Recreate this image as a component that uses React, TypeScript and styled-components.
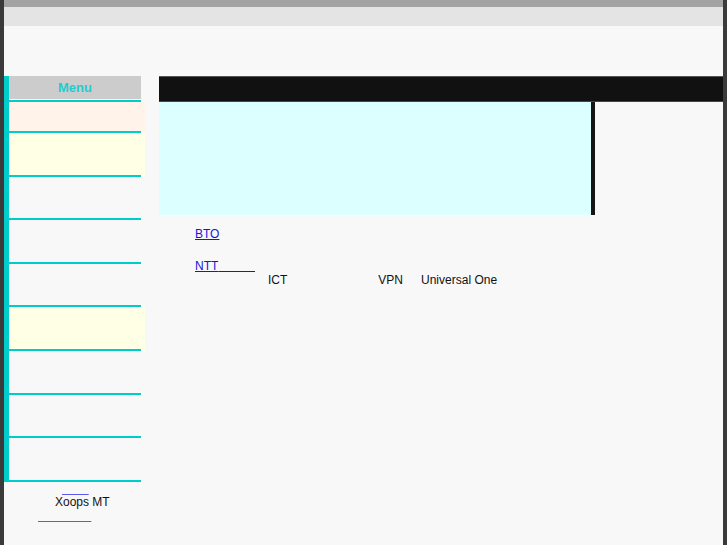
import styled, { createGlobalStyle } from 'styled-components'

const teal = '#00cccc'
const nb = (n: number) => '\u00a0'.repeat(n)

const GlobalStyle = createGlobalStyle`
    html, body {
        margin: 0;
        padding: 0;
        background: #f8f8f8;
    }
    body {
        font-family: "Liberation Sans", Arial, sans-serif;
        font-size: 12px;
        color: #111;
    }
`

const Frame = styled.div`
    box-sizing: border-box;
    min-height: 100vh;
    border-left: 4px solid #3a3a3a;
    border-right: 4px solid #3a3a3a;
    background: #f8f8f8;
`

const TopStrip = styled.div`
    height: 7px;
    background: #a3a3a3;
`

const SubStrip = styled.div`
    height: 19px;
    background: #e4e4e4;
`

const Banner = styled.div`
    height: 50px;
`

const Layout = styled.div`
    display: flex;
    align-items: flex-start;
    gap: 18px;
`

const Sidebar = styled.aside`
    width: 137px;
    flex-shrink: 0;
`

const Menu = styled.nav`
    border-left: 5px solid ${teal};
`

const MenuHead = styled.div`
    width: 132px;
    height: 23px;
    line-height: 23px;
    background: #cccccc;
    border-bottom: 1px solid #ffffff;
    color: #22cccc;
    font-size: 13px;
    font-weight: bold;
    text-align: center;
`

const MenuList = styled.ul`
    list-style: none;
    margin: 0;
    padding: 0;
    width: 132px;
    border-top: 2px solid ${teal};
`

const MenuItem = styled.li<{ $bg?: string; $short?: boolean }>`
    height: ${(p) => (p.$short ? '29px' : '41.6px')};
    background: ${(p) => p.$bg || 'transparent'};
    box-shadow: 4px 0 0 ${(p) => p.$bg || 'transparent'};
    border-bottom: 2px solid ${teal};
`

const Footer = styled.div`
    padding-top: 1px;
    font-size: 12px;
    line-height: 13.5px;
`

const FootLine = styled.div<{ $indent: number }>`
    padding-left: ${(p) => p.$indent}px;
    white-space: pre;
`

const FootLink = styled.a`
    color: #5a5aee;
    text-decoration: underline;
`

const Main = styled.main`
    flex: 1;
    min-width: 0;
`

const TitleBar = styled.div`
    box-sizing: border-box;
    height: 26px;
    background: #111111;
    border-top: 1px solid #555;
    border-bottom: 1px solid #444;
`

const Hero = styled.div`
    width: 432px;
    height: 113px;
    background: #dcffff;
    border-right: 4px solid #151515;
`

const Content = styled.div`
    padding: 12px 0 0 36px;
    font-size: 12px;
    line-height: 14px;
`

const Para = styled.p`
    margin: 0 0 18px;
    white-space: nowrap;
`

const Link = styled.a`
    color: #1515e0;
    text-decoration: underline;
`

const Gap = styled.span<{ $w: number }>`
    display: inline-block;
    width: ${(p) => p.$w}px;
`

const shades: { bg?: string; short?: boolean }[] = [
    { bg: '#fff3ea', short: true },
    { bg: '#ffffe6' },
    {},
    {},
    {},
    { bg: '#ffffe6' },
    {},
    {},
    {},
]

function App() {
    return (
        <Frame>
            <GlobalStyle />
            <TopStrip />
            <SubStrip />
            <Banner />
            <Layout>
                <Sidebar>
                    <Menu>
                        <MenuHead>Menu</MenuHead>
                        <MenuList>
                            {shades.map((s, i) => (
                                <MenuItem key={i} $bg={s.bg} $short={s.short} />
                            ))}
                        </MenuList>
                    </Menu>
                    <Footer>
                        <FootLine $indent={58}>
                            <FootLink href="#">{nb(8)}</FootLink>
                        </FootLine>
                        <FootLine $indent={51}>Xoops MT</FootLine>
                        <FootLine $indent={34}>
                            <FootLink href="#">{nb(16)}</FootLink>
                        </FootLine>
                    </Footer>
                </Sidebar>
                <Main>
                    <TitleBar />
                    <Hero />
                    <Content>
                        <Para>
                            <Link href="#">BTO</Link>
                        </Para>
                        <Para>
                            <Link href="#">NTT{nb(11)}</Link>
                            <br />
                            <Gap $w={73} />
                            ICT
                            <Gap $w={91} />
                            VPN
                            <Gap $w={18} />
                            Universal One
                        </Para>
                    </Content>
                </Main>
            </Layout>
        </Frame>
    )
}

export default App
